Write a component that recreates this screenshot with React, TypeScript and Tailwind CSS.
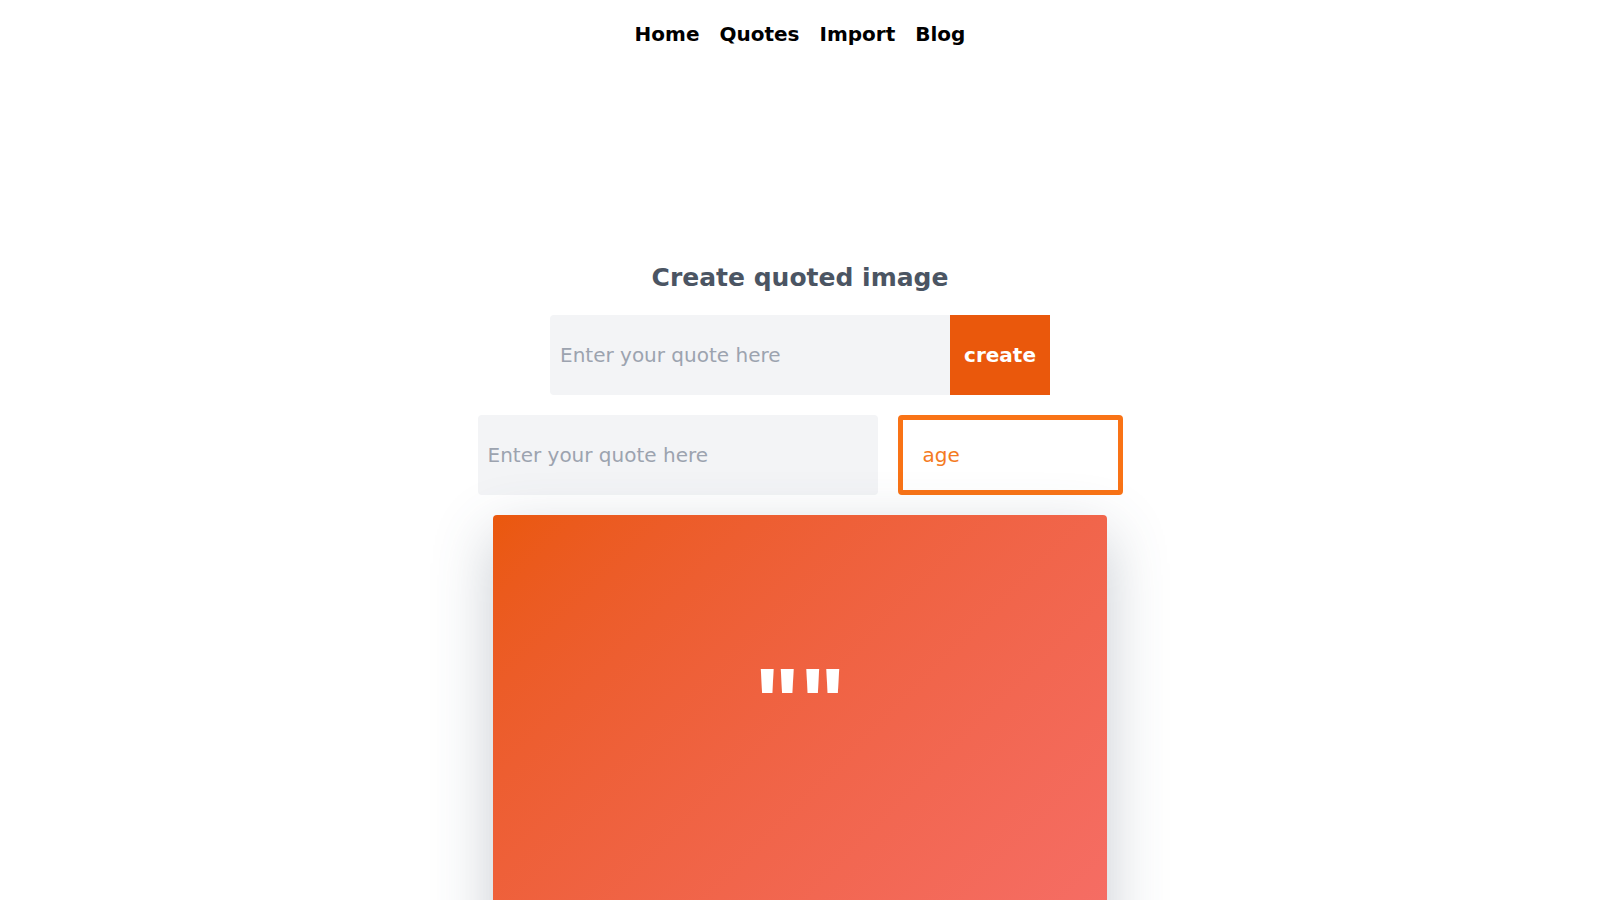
import { useState } from "react";

const navLinks = [
  { label: "Home", href: "/" },
  { label: "Quotes", href: "/quotes" },
  { label: "Import", href: "/import" },
  { label: "Blog", href: "/blog" },
];

export default function App() {
  const [quote, setQuote] = useState("");

  return (
    <div className="min-h-screen bg-white font-['DejaVu_Sans',sans-serif]">
      <nav className="flex justify-center gap-5 py-5">
        {navLinks.map((link) => (
          <a key={link.href} href={link.href} className="text-xl font-bold leading-7 text-black">
            {link.label}
          </a>
        ))}
      </nav>

      <main className="flex flex-col items-center pt-[194px]">
        <h1 className="text-[25px] font-bold leading-8 text-[#4b5563]">Create quoted image</h1>

        {/* Main input + create button */}
        <div className="mt-[21px] flex">
          <input
            type="text"
            value={quote}
            onChange={(e) => setQuote(e.target.value)}
            placeholder="Enter your quote here"
            className="h-20 w-[400px] rounded-l bg-[#f3f4f6] px-2.5 text-xl text-gray-700 placeholder:text-[#9ca3af] outline-none"
          />
          <button type="button" className="h-20 w-[100px] bg-[#ea580c] text-xl font-bold text-white">
            create
          </button>
        </div>

        {/* Second row */}
        <div className="mt-5 flex gap-5">
          <input
            type="text"
            placeholder="Enter your quote here"
            className="h-20 w-[400px] rounded bg-[#f3f4f6] px-2.5 text-xl text-gray-700 placeholder:text-[#9ca3af] outline-none"
          />
          <div className="flex h-20 w-[225px] items-center rounded border-[5px] border-[#f97316] px-5 text-xl text-[#f47a22]">
            age
          </div>
        </div>

        {/* Preview card */}
        <div className="mt-5 h-[614px] w-[614px] rounded bg-gradient-to-br from-[#ea580c] to-[#f87171] pt-[139px] shadow-[0_20px_60px_rgba(71,85,105,0.3)]">
          <p className="text-center font-['Liberation_Sans',sans-serif] text-8xl font-bold leading-none text-white">
            "{quote}"
          </p>
        </div>
      </main>
    </div>
  );
}
